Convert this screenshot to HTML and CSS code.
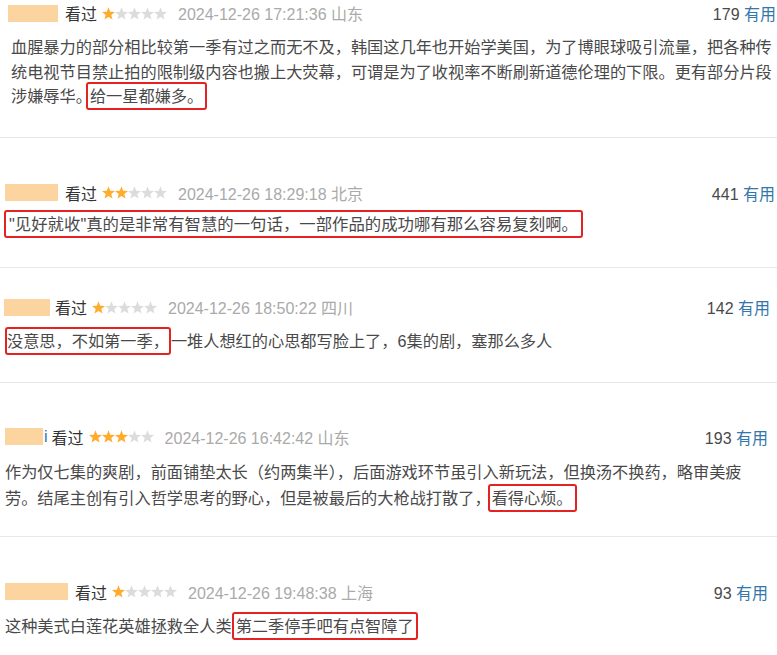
FILE: index.html
```html
<!DOCTYPE html>
<html lang="zh-CN">
<head>
    <meta charset="UTF-8">
    <meta name="viewport" content="width=device-width, initial-scale=1.0">
    <title>短评</title>
    <link rel="stylesheet" href="styles.css">
</head>
<body>
    <svg class="defs" width="0" height="0">
        <defs>
            <polygon id="star" points="6.5,0.2 8.2,4.65 13,4.9 9.26,7.9 10.5,12.6 6.5,9.9 2.5,12.6 3.74,7.9 0,4.9 4.8,4.65"></polygon>
        </defs>
    </svg>
    <main class="comments">
        <div class="comment c1">
            <div class="info">
                <span class="user user-1"></span>
                <span class="status">看过</span>
                <svg class="stars" viewBox="0 0 65 13">
                    <use href="#star" x="0" class="on"></use>
                    <use href="#star" x="13" class="off"></use>
                    <use href="#star" x="26" class="off"></use>
                    <use href="#star" x="39" class="off"></use>
                    <use href="#star" x="52" class="off"></use>
                </svg>
                <span class="time">2024-12-26 17:21:36 山东</span>
                <span class="votes">179 <a href="#">有用</a></span>
            </div>
            <p class="text">血腥暴力的部分相比较第一季有过之而无不及，韩国这几年也开始学美国，为了博眼球吸引流量，把各种传统电视节目禁止拍的限制级内容也搬上大荧幕，可谓是为了收视率不断刷新道德伦理的下限。更有部分片段涉嫌辱华。<span class="mark mark-pull">给一星都嫌多。</span></p>
        </div>
        <div class="comment c2">
            <div class="info">
                <span class="user user-2"></span>
                <span class="status">看过</span>
                <svg class="stars" viewBox="0 0 65 13">
                    <use href="#star" x="0" class="on"></use>
                    <use href="#star" x="13" class="on"></use>
                    <use href="#star" x="26" class="off"></use>
                    <use href="#star" x="39" class="off"></use>
                    <use href="#star" x="52" class="off"></use>
                </svg>
                <span class="time">2024-12-26 18:29:18 北京</span>
                <span class="votes">441 <a href="#">有用</a></span>
            </div>
            <p class="text"><span class="mark">"见好就收"真的是非常有智慧的一句话，一部作品的成功哪有那么容易复刻啊。</span></p>
        </div>
        <div class="comment c3">
            <div class="info">
                <span class="user user-3"></span>
                <span class="status">看过</span>
                <svg class="stars" viewBox="0 0 65 13">
                    <use href="#star" x="0" class="on"></use>
                    <use href="#star" x="13" class="off"></use>
                    <use href="#star" x="26" class="off"></use>
                    <use href="#star" x="39" class="off"></use>
                    <use href="#star" x="52" class="off"></use>
                </svg>
                <span class="time">2024-12-26 18:50:22 四川</span>
                <span class="votes">142 <a href="#">有用</a></span>
            </div>
            <p class="text"><span class="mark">没意思，不如第一季，</span>一堆人想红的心思都写脸上了，6集的剧，塞那么多人</p>
        </div>
        <div class="comment c4">
            <div class="info">
                <span class="user user-4"></span><span class="user-tail">i</span>
                <span class="status">看过</span>
                <svg class="stars" viewBox="0 0 65 13">
                    <use href="#star" x="0" class="on"></use>
                    <use href="#star" x="13" class="on"></use>
                    <use href="#star" x="26" class="on"></use>
                    <use href="#star" x="39" class="off"></use>
                    <use href="#star" x="52" class="off"></use>
                </svg>
                <span class="time">2024-12-26 16:42:42 山东</span>
                <span class="votes">193 <a href="#">有用</a></span>
            </div>
            <p class="text">作为仅七集的爽剧，前面铺垫太长（约两集半），后面游戏环节虽引入新玩法，但换汤不换药，略审美疲劳。结尾主创有引入哲学思考的野心，但是被最后的大枪战打散了，<span class="mark mark-pull-sm">看得心烦。</span></p>
        </div>
        <div class="comment c5">
            <div class="info">
                <span class="user user-5"></span>
                <span class="status">看过</span>
                <svg class="stars" viewBox="0 0 65 13">
                    <use href="#star" x="0" class="on"></use>
                    <use href="#star" x="13" class="off"></use>
                    <use href="#star" x="26" class="off"></use>
                    <use href="#star" x="39" class="off"></use>
                    <use href="#star" x="52" class="off"></use>
                </svg>
                <span class="time">2024-12-26 19:48:38 上海</span>
                <span class="votes">93 <a href="#">有用</a></span>
            </div>
            <p class="text">这种美式白莲花英雄拯救全人类<span class="mark">第二季停手吧有点智障了</span></p>
        </div>
    </main>
</body>
</html>
```

FILE: styles.css
```css
body {
    margin: 0;
    background-color: #ffffff;
    font-family: "Liberation Sans", Arial, "Noto Sans CJK SC", sans-serif;
    color: #494949;
}
.defs {
    position: absolute;
}
.comments {
    display: flex;
    flex-direction: column;
    overflow: hidden;
    height: 655px;
}
.comment {
    border-bottom: 1px solid #e8e8e8;
    flex-shrink: 0;
}
.info {
    display: flex;
    align-items: center;
    height: 24px;
    font-size: 16px;
    white-space: nowrap;
}
.user {
    display: inline-block;
    height: 17px;
    background-color: #fcd4a0;
    margin-right: 7px;
}
.user-tail {
    color: #3377aa;
    margin: 0 4px 0 -6px;
}
.status {
    color: #333333;
    margin-right: 5px;
}
.stars {
    width: 65px;
    height: 13px;
    margin-right: 11px;
}
.stars .on {
    fill: #ffac2d;
}
.stars .off {
    fill: #dcdcdc;
}
.time {
    color: #aaaaaa;
}
.votes {
    margin-left: auto;
    color: #494949;
}
.votes a {
    color: #3377aa;
    text-decoration: none;
}
.text {
    margin: 0;
    font-size: 16.2px;
    line-height: 24.5px;
}
.mark {
    border: 2px solid #e42222;
    border-radius: 3px;
    padding: 3px 2px;
}
/* the full stop before the box sits tight against it in the original */
.mark-pull {
    margin-left: -6px;
}
.mark-pull-sm {
    margin-left: -3px;
}

/* each review was cut from a separate screenshot, so offsets differ a bit */
.c1 {
    padding: 1px 1px 28px 8px;
}
.c1 .text {
    margin: 10px 0 0 3px;
}
.user-1 {
    width: 50px;
}
.c2 {
    padding: 43px 2px 31px 4px;
}
.c2 .text {
    margin-top: 7px;
    font-size: 16.4px;
}
.c2 .mark {
    padding: 3px 3px;
}
.user-2 {
    width: 53px;
    margin-left: 1px;
}
.c3 {
    padding: 27px 7px 28px 4px;
}
.c3 .text {
    margin: 10px 0 0 1px;
}
.c3 .mark {
    padding: 3px 0;
}
.user-3 {
    width: 46px;
    margin-right: 5px;
}
.c4 {
    padding: 42px 9px 25px 5px;
}
.c4 .text {
    margin: 10px 10px 0 0;
    line-height: 26px;
}
.user-4 {
    width: 38px;
}
.c5 {
    padding: 43px 9px 30px 5px;
}
.c5 .text {
    margin-top: 10px;
}
.user-5 {
    width: 63px;
}
```
